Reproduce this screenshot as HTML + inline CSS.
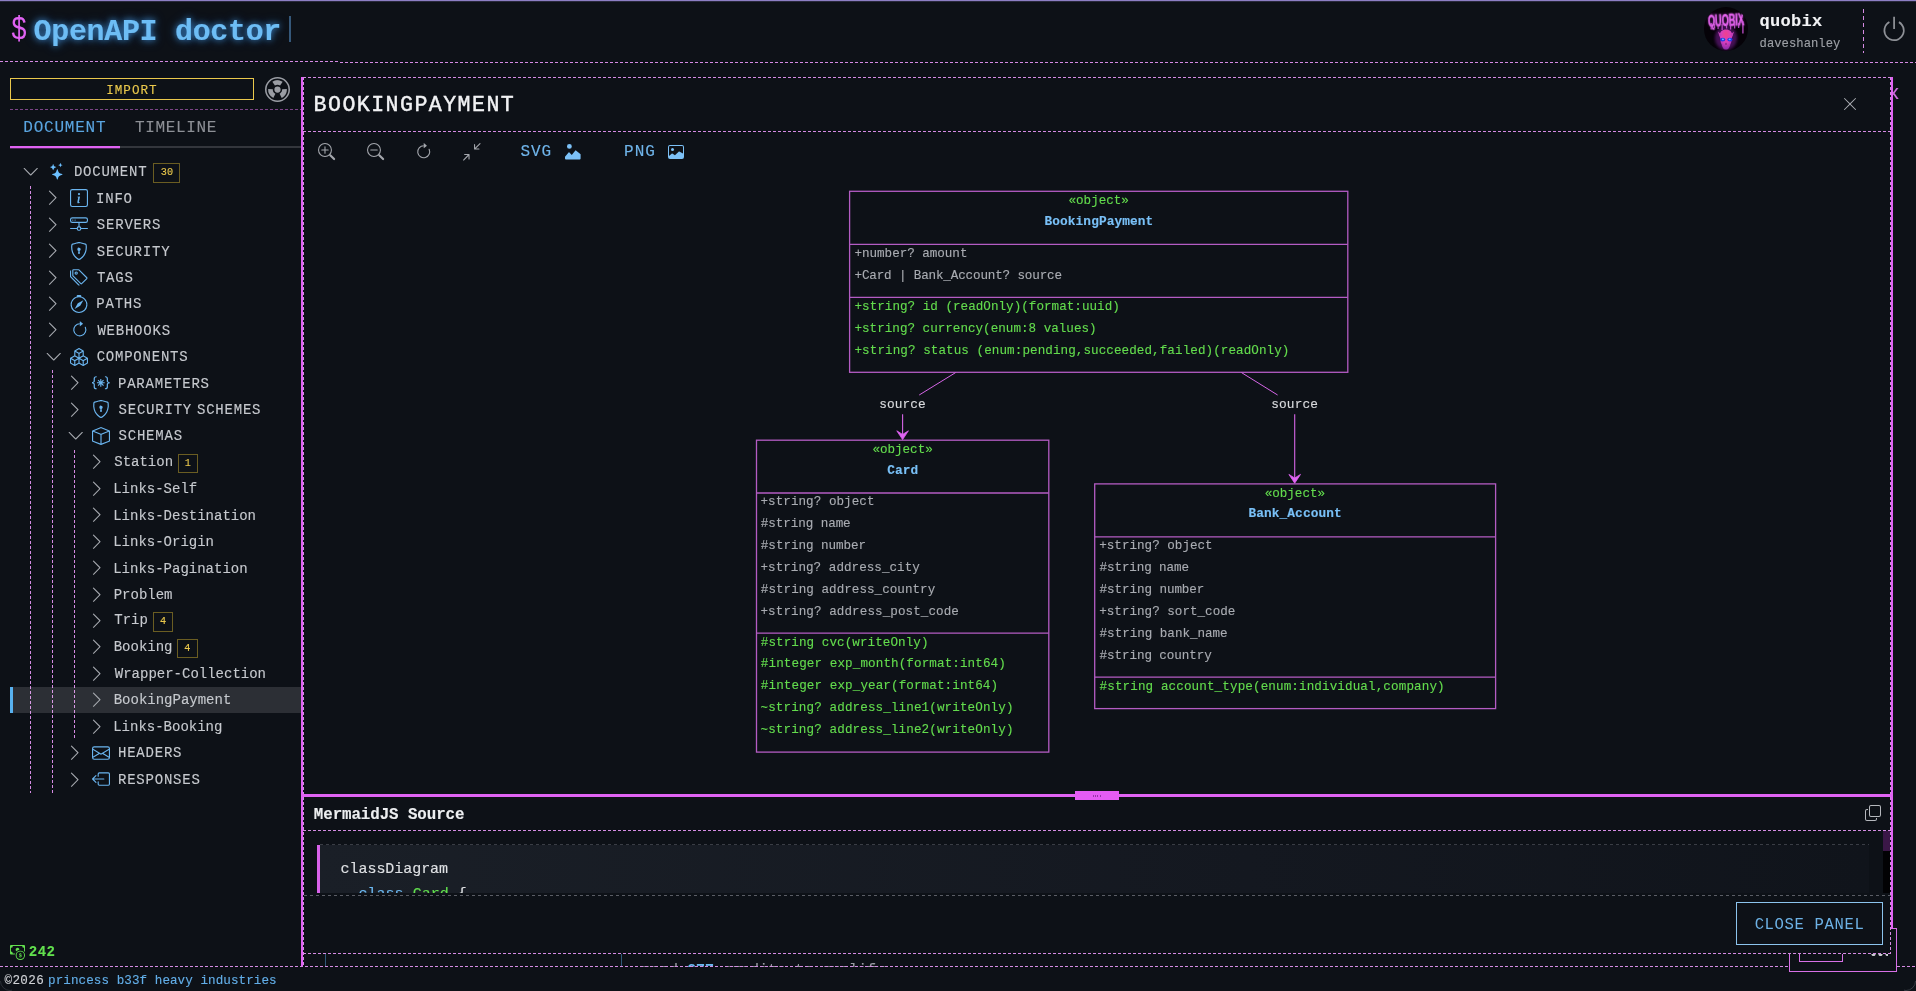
<!DOCTYPE html>
<html lang="en"><head><meta charset="utf-8"><title>OpenAPI doctor</title>
<style>
html,body{margin:0;padding:0;background:#0d1117;}
body{width:1916px;height:991px;position:relative;overflow:hidden;font-family:"Liberation Mono","DejaVu Sans Mono",monospace;}
.t{position:absolute;white-space:pre;line-height:1;-webkit-text-stroke:0.13px currentColor;}
.b{position:absolute;box-sizing:border-box;}
.i{position:absolute;display:block;overflow:visible;}
.clip{position:absolute;overflow:hidden;}
#root{position:absolute;left:0;top:0;width:1916px;height:991px;overflow:hidden;will-change:transform;}
</style></head><body><div id="root">
<div class="b" style="left:0px;top:0px;width:1916px;height:1px;background:#8d7fc4;"></div>
<div class="b" style="left:0px;top:1px;width:1916px;height:1px;background:rgba(141,127,196,.22);"></div>
<div class="t" style="left:13.34px;top:14.40px;font-size:33.8px;color:#e063f3;transform:scaleX(.79);transform-origin:0 0;left:0;margin-left:10.54px;">$</div>
<div class="t" style="left:33.55px;top:17.10px;font-size:30px;color:#6dbdf5;font-weight:700;letter-spacing:-0.324px;text-shadow:0 0 6px rgba(70,160,240,.75),0 0 12px rgba(60,140,230,.45);">OpenAPI doctor</div>
<div class="b" style="left:288.6px;top:15.5px;width:2.2px;height:26px;background:#35587a;"></div>
<div class="b" style="left:0px;top:61px;width:340px;height:1px;background:repeating-linear-gradient(90deg,#d58be3 0 3px,transparent 3px 5px);"></div>
<div class="b" style="left:340px;top:62px;width:1576px;height:1px;background:repeating-linear-gradient(90deg,#d58be3 0 3px,transparent 3px 5px);"></div>
<svg class="i" style="left:1704px;top:6px" width="44" height="46" viewBox="0 0 44 46">
<defs><clipPath id="av"><circle cx="22" cy="23" r="22"/></clipPath>
<filter id="gl" x="-30%" y="-30%" width="160%" height="160%"><feGaussianBlur stdDeviation="1.6"/></filter>
<filter id="gs" x="-30%" y="-30%" width="160%" height="160%"><feGaussianBlur stdDeviation="0.5"/></filter>
<radialGradient id="sk" cx="50%" cy="25%" r="75%"><stop offset="0" stop-color="#f0408c"/><stop offset="0.55" stop-color="#d63fc0"/><stop offset="1" stop-color="#8a2aa8"/></radialGradient></defs>
<circle cx="22" cy="23" r="22" fill="#050208"/>
<g clip-path="url(#av)">
<ellipse cx="22" cy="32" rx="11" ry="12" fill="#7a1f98" opacity=".55" filter="url(#gl)"/>
<text x="22" y="20" text-anchor="middle" font-family="Liberation Sans, sans-serif" font-weight="700" font-size="16" fill="#b040c8" opacity=".7" textLength="36" lengthAdjust="spacingAndGlyphs" filter="url(#gl)">QUOBIX</text>
<text x="22" y="20" text-anchor="middle" font-family="Liberation Sans, sans-serif" font-weight="700" font-size="16" fill="#e564ee" stroke="#e564ee" stroke-width=".5" textLength="36" lengthAdjust="spacingAndGlyphs" transform="rotate(-3 22 14)" filter="url(#gs)">QUOBIX</text>
<path d="M6.500 17h1.300v6.500h-1.300zM10 18h1.200v4H10zM13.500 18h1.200v5h-1.200zM17.500 18h1.300v6h-1.300zM22 18h1.200v4.500H22zM26 18h1.200v5.500H26zM30 18h1.300v4.500h-1.300zM34 17h1.300v5h-1.300zM38.200 15h1.400v12.500h-1.400z" fill="#cf55dc" opacity=".85"/>
<path d="M22 23.500c-3.600 0-6.300 2.300-6.300 5.800 0 1.800.5 3.200 1.200 4.300-.6 1.500-.3 3.300.7 4.600.5 2.600 1.900 5.400 4.400 5.400s3.900-2.800 4.400-5.400c1-1.300 1.300-3.100.7-4.600.7-1.100 1.200-2.500 1.200-4.300 0-3.500-2.700-5.800-6.300-5.800z" fill="url(#sk)" filter="url(#gs)"/>
<path d="M14 25.500l4 3.500-2.500 1.500zM30 25.500l-4 3.500 2.500 1.500z" fill="#c23fb6"/>
<ellipse cx="18.700" cy="33.600" rx="2.600" ry="1.900" fill="#2238e8" filter="url(#gs)"/>
<ellipse cx="25.900" cy="33.600" rx="2.600" ry="1.900" fill="#2238e8" filter="url(#gs)"/>
<ellipse cx="18.900" cy="33.400" rx="1.100" ry=".8" fill="#7aa4ff"/>
<ellipse cx="25.700" cy="33.400" rx="1.100" ry=".8" fill="#7aa4ff"/>
<path d="M21.300 38.500l.7-2 .7 2z" fill="#3a0f48"/>
</g></svg>
<div class="t" style="left:1759.59px;top:12.70px;font-size:17px;color:#f2f3f5;font-weight:700;letter-spacing:0.282px;">quobix</div>
<div class="t" style="left:1759.58px;top:37.50px;font-size:12.2px;color:#9da0a6;letter-spacing:0.029px;">daveshanley</div>
<div class="b" style="left:1863px;top:9px;width:1px;height:44px;background:repeating-linear-gradient(180deg,#d58be3 0 4px,transparent 4px 7px);"></div>
<svg class="i" style="left:1879.90px;top:14.80px;" width="28.2" height="28.2" viewBox="0 0 16 16" fill="#8e9197"><path d="M7.5 1v7h1V1h-1z"/><path d="M3 8.812a4.999 4.999 0 0 1 2.578-4.375l-.485-.874A6 6 0 1 0 11 3.616l-.501.865A5 5 0 1 1 3 8.812z"/></svg>
<div class="b" style="left:10px;top:78px;width:244px;height:22.4px;border:1px solid #eac84c;"></div>
<div class="t" style="left:106.16px;top:84.70px;font-size:12.6px;color:#eac84c;letter-spacing:1.030px;">IMPORT</div>
<svg class="i" style="left:264.70px;top:76.90px;" width="25" height="25" viewBox="0 0 16 16" fill="#9a9da4"><path d="M8 1a7 7 0 1 0 0 14A7 7 0 0 0 8 1ZM0 8a8 8 0 1 1 16 0A8 8 0 0 1 0 8Z"/><path d="M9.653 5.496A2.986 2.986 0 0 0 8 5c-.61 0-1.179.183-1.653.496L4.694 2.992A5.972 5.972 0 0 1 8 2c1.222 0 2.358.365 3.306.992L9.653 5.496Zm1.342 2.324a2.986 2.986 0 0 1-.884 2.312 3.01 3.01 0 0 1-.769.552l1.342 2.683c.57-.286 1.09-.66 1.538-1.103a5.986 5.986 0 0 0 1.767-4.624l-2.994.18Zm-5.679 5.548 1.342-2.684A3 3 0 0 1 5.005 7.82l-2.994-.18a6 6 0 0 0 3.306 5.728ZM10 8a2 2 0 1 1-4 0 2 2 0 0 1 4 0Z"/></svg>
<div class="b" style="left:10px;top:109px;width:291px;height:1px;background:repeating-linear-gradient(90deg,#7c4487 0 3px,transparent 3px 5px);"></div>
<div class="t" style="left:23.33px;top:119.90px;font-size:16px;color:#5aa5e0;letter-spacing:0.765px;">DOCUMENT</div>
<div class="t" style="left:135.01px;top:119.90px;font-size:16px;color:#8d9096;letter-spacing:0.631px;">TIMELINE</div>
<div class="b" style="left:120px;top:146px;width:181px;height:2px;background:#33363c;"></div>
<div class="b" style="left:10px;top:146px;width:110px;height:2px;background:#e063f3;"></div>
<div class="b" style="left:10px;top:148px;width:110px;height:1px;background:rgba(224,99,243,.3);"></div>
<div class="b" style="left:30px;top:186px;width:1px;height:607px;background:repeating-linear-gradient(180deg,#d58be3 0 3px,transparent 3px 5px);"></div>
<div class="b" style="left:52px;top:370px;width:1px;height:423px;background:repeating-linear-gradient(180deg,#d58be3 0 3px,transparent 3px 5px);"></div>
<div class="b" style="left:74px;top:450px;width:1px;height:290px;background:repeating-linear-gradient(180deg,#d58be3 0 3px,transparent 3px 5px);"></div>
<div class="b" style="left:10px;top:687.2px;width:291px;height:25.4px;background:rgba(255,255,255,.13);"></div>
<div class="b" style="left:10px;top:687.2px;width:3.2px;height:25.4px;background:#58b2f0;"></div>
<svg class="i" style="left:22.36px;top:163.16px;" width="17.48" height="17.48" viewBox="0 0 16 16" fill="#a7aab0"><path fill-rule="evenodd" d="M1.646 4.646a.5.5 0 0 1 .708 0L8 10.293l5.646-5.647a.5.5 0 0 1 .708.708l-6 6a.5.5 0 0 1-.708 0l-6-6a.5.5 0 0 1 0-.708z"/></svg>
<svg class="i" style="left:48.60px;top:163.00px;" width="16.6" height="16.6" viewBox="0 0 16 16" fill="#6cc0ff"><path d="M7.657 6.247c.11-.33.576-.33.686 0l.645 1.937a2.89 2.89 0 0 0 1.829 1.828l1.936.645c.33.11.33.576 0 .686l-1.937.645a2.89 2.89 0 0 0-1.828 1.829l-.645 1.936a.361.361 0 0 1-.686 0l-.645-1.937a2.89 2.89 0 0 0-1.828-1.828l-1.937-.645a.361.361 0 0 1 0-.686l1.937-.645a2.89 2.89 0 0 0 1.828-1.828l.645-1.937zM3.794 1.148a.217.217 0 0 1 .412 0l.387 1.162c.173.518.579.924 1.097 1.097l1.162.387a.217.217 0 0 1 0 .412l-1.162.387A1.734 1.734 0 0 0 4.593 5.69l-.387 1.162a.217.217 0 0 1-.412 0L3.407 5.69A1.734 1.734 0 0 0 2.31 4.593l-1.162-.387a.217.217 0 0 1 0-.412l1.162-.387A1.734 1.734 0 0 0 3.407 2.31l.387-1.162zM10.863.099a.145.145 0 0 1 .274 0l.258.774c.115.346.386.617.732.732l.774.258a.145.145 0 0 1 0 .274l-.774.258a1.156 1.156 0 0 0-.732.732l-.258.774a.145.145 0 0 1-.274 0l-.258-.774a1.156 1.156 0 0 0-.732-.732L9.1 2.137a.145.145 0 0 1 0-.274l.774-.258c.346-.115.617-.386.732-.732L10.863.1z"/></svg>
<div class="t" style="left:73.89px;top:165.25px;font-size:14px;color:#c6c9ce;letter-spacing:0.780px;">DOCUMENT</div>
<div class="b" style="left:153.4px;top:163.2px;width:27px;height:19.5px;border:1px solid #6a5d22;"></div>
<div class="t" style="left:160.81px;top:168.00px;font-size:10.2px;color:#eac84c;">30</div>
<svg class="i" style="left:44.08px;top:189.28px;" width="17.48" height="17.48" viewBox="0 0 16 16" fill="#a7aab0"><path fill-rule="evenodd" d="M4.646 1.646a.5.5 0 0 1 .708 0l6 6a.5.5 0 0 1 0 .708l-6 6a.5.5 0 0 1-.708-.708L10.293 8 4.646 2.354a.5.5 0 0 1 0-.708z"/></svg>
<svg class="i" style="left:70.00px;top:189.02px;" width="18" height="18" viewBox="0 0 16 16" fill="#6ab4ee"><path d="M14 1a1 1 0 0 1 1 1v12a1 1 0 0 1-1 1H2a1 1 0 0 1-1-1V2a1 1 0 0 1 1-1h12zM2 0a2 2 0 0 0-2 2v12a2 2 0 0 0 2 2h12a2 2 0 0 0 2-2V2a2 2 0 0 0-2-2H2z"/><path d="m8.93 6.588-2.29.287-.082.38.45.083c.294.07.352.176.288.469l-.738 3.468c-.194.897.105 1.319.808 1.319.545 0 1.178-.252 1.465-.598l.088-.416c-.2.176-.492.246-.686.246-.275 0-.375-.193-.304-.533L8.93 6.588zM9 4.5a1 1 0 1 1-2 0 1 1 0 0 1 2 0z"/></svg>
<div class="t" style="left:96.02px;top:191.67px;font-size:14px;color:#c6c9ce;letter-spacing:0.780px;">INFO</div>
<svg class="i" style="left:44.08px;top:215.70px;" width="17.48" height="17.48" viewBox="0 0 16 16" fill="#a7aab0"><path fill-rule="evenodd" d="M4.646 1.646a.5.5 0 0 1 .708 0l6 6a.5.5 0 0 1 0 .708l-6 6a.5.5 0 0 1-.708-.708L10.293 8 4.646 2.354a.5.5 0 0 1 0-.708z"/></svg>
<svg class="i" style="left:70.00px;top:215.44px;" width="18" height="18" viewBox="0 0 16 16" fill="#6ab4ee"><path d="M4.5 5a.5.5 0 1 0 0-1 .5.5 0 0 0 0 1zM3 4.5a.5.5 0 1 1-1 0 .5.5 0 0 1 1 0z"/><path d="M0 4a2 2 0 0 1 2-2h12a2 2 0 0 1 2 2v1a2 2 0 0 1-2 2H8.5v3a1.5 1.5 0 0 1 1.5 1.5h5.5a.5.5 0 0 1 0 1H10A1.5 1.5 0 0 1 8.5 14h-1A1.5 1.5 0 0 1 6 12.5H.5a.5.5 0 0 1 0-1H6A1.5 1.5 0 0 1 7.5 10V7H2a2 2 0 0 1-2-2V4zm1 0v1a1 1 0 0 0 1 1h12a1 1 0 0 0 1-1V4a1 1 0 0 0-1-1H2a1 1 0 0 0-1 1zm6 7.5v1a.5.5 0 0 0 .5.5h1a.5.5 0 0 0 .5-.5v-1a.5.5 0 0 0-.5-.5h-1a.5.5 0 0 0-.5.5z"/></svg>
<div class="t" style="left:96.86px;top:218.09px;font-size:14px;color:#c6c9ce;letter-spacing:0.780px;">SERVERS</div>
<svg class="i" style="left:44.08px;top:242.12px;" width="17.48" height="17.48" viewBox="0 0 16 16" fill="#a7aab0"><path fill-rule="evenodd" d="M4.646 1.646a.5.5 0 0 1 .708 0l6 6a.5.5 0 0 1 0 .708l-6 6a.5.5 0 0 1-.708-.708L10.293 8 4.646 2.354a.5.5 0 0 1 0-.708z"/></svg>
<svg class="i" style="left:70.00px;top:241.86px;" width="18" height="18" viewBox="0 0 16 16" fill="#6ab4ee"><path d="M5.338 1.59a61.44 61.44 0 0 0-2.837.856.481.481 0 0 0-.328.39c-.554 4.157.726 7.19 2.253 9.188a10.725 10.725 0 0 0 2.287 2.233c.346.244.652.42.893.533.12.057.218.095.293.118a.55.55 0 0 0 .101.025.615.615 0 0 0 .1-.025c.076-.023.174-.061.294-.118.24-.113.547-.29.893-.533a10.726 10.726 0 0 0 2.287-2.233c1.527-1.997 2.807-5.031 2.253-9.188a.48.48 0 0 0-.328-.39c-.651-.213-1.75-.56-2.837-.855C9.552 1.29 8.531 1.067 8 1.067c-.53 0-1.552.223-2.662.524zM5.072.56C6.157.265 7.31 0 8 0s1.843.265 2.928.56c1.11.3 2.229.655 2.887.87a1.54 1.54 0 0 1 1.044 1.262c.596 4.477-.787 7.795-2.465 9.99a11.775 11.775 0 0 1-2.517 2.453 7.159 7.159 0 0 1-1.048.625c-.28.132-.581.24-.829.24s-.548-.108-.829-.24a7.158 7.158 0 0 1-1.048-.625 11.777 11.777 0 0 1-2.517-2.453C1.928 10.487.545 7.169 1.141 2.692A1.54 1.54 0 0 1 2.185 1.43 62.456 62.456 0 0 1 5.072.56z"/><path d="M9.5 6.5a1.5 1.5 0 0 1-1 1.415l.385 1.99a.5.5 0 0 1-.491.595h-.788a.5.5 0 0 1-.49-.595l.384-1.99a1.5 1.5 0 1 1 2-1.415z"/></svg>
<div class="t" style="left:96.86px;top:244.51px;font-size:14px;color:#c6c9ce;letter-spacing:0.780px;">SECURITY</div>
<svg class="i" style="left:44.08px;top:268.54px;" width="17.48" height="17.48" viewBox="0 0 16 16" fill="#a7aab0"><path fill-rule="evenodd" d="M4.646 1.646a.5.5 0 0 1 .708 0l6 6a.5.5 0 0 1 0 .708l-6 6a.5.5 0 0 1-.708-.708L10.293 8 4.646 2.354a.5.5 0 0 1 0-.708z"/></svg>
<svg class="i" style="left:70.00px;top:268.28px;" width="18" height="18" viewBox="0 0 16 16" fill="#6ab4ee"><path d="M3 2v4.586l7 7L14.586 9l-7-7H3zM2 2a1 1 0 0 1 1-1h4.586a1 1 0 0 1 .707.293l7 7a1 1 0 0 1 0 1.414l-4.586 4.586a1 1 0 0 1-1.414 0l-7-7A1 1 0 0 1 2 6.586V2z"/><path d="M5.5 5a.5.5 0 1 1 0-1 .5.5 0 0 1 0 1zm0 1a1.5 1.5 0 1 0 0-3 1.5 1.5 0 0 0 0 3zM1 7.086a1 1 0 0 0 .293.707L8.75 15.25l-.043.043a1 1 0 0 1-1.414 0l-7-7A1 1 0 0 1 0 7.586V3a1 1 0 0 1 1-1v5.086z"/></svg>
<div class="t" style="left:96.88px;top:270.93px;font-size:14px;color:#c6c9ce;letter-spacing:0.780px;">TAGS</div>
<svg class="i" style="left:44.08px;top:294.96px;" width="17.48" height="17.48" viewBox="0 0 16 16" fill="#a7aab0"><path fill-rule="evenodd" d="M4.646 1.646a.5.5 0 0 1 .708 0l6 6a.5.5 0 0 1 0 .708l-6 6a.5.5 0 0 1-.708-.708L10.293 8 4.646 2.354a.5.5 0 0 1 0-.708z"/></svg>
<svg class="i" style="left:70.00px;top:294.70px;" width="18" height="18" viewBox="0 0 16 16" fill="#6ab4ee"><path d="M8 16.016a7.5 7.5 0 0 0 1.962-14.74A1 1 0 0 0 9 0H7a1 1 0 0 0-.962 1.276A7.5 7.5 0 0 0 8 16.016zm6.5-7.5a6.5 6.5 0 1 1-13 0 6.5 6.5 0 0 1 13 0z"/><path d="m6.94 7.44 4.95-2.83-2.83 4.95-4.949 2.83 2.828-4.95z"/></svg>
<div class="t" style="left:96.29px;top:297.35px;font-size:14px;color:#c6c9ce;letter-spacing:0.780px;">PATHS</div>
<svg class="i" style="left:44.08px;top:321.38px;" width="17.48" height="17.48" viewBox="0 0 16 16" fill="#a7aab0"><path fill-rule="evenodd" d="M4.646 1.646a.5.5 0 0 1 .708 0l6 6a.5.5 0 0 1 0 .708l-6 6a.5.5 0 0 1-.708-.708L10.293 8 4.646 2.354a.5.5 0 0 1 0-.708z"/></svg>
<svg class="i" style="left:70.50px;top:320.62px;" width="17.6" height="17.6" viewBox="0 0 16 16" fill="#6ab4ee"><path fill-rule="evenodd" d="M8 3a5 5 0 1 0 4.546 2.914.5.5 0 0 1 .908-.417A6 6 0 1 1 8 2v1z"/><path d="M8 4.466V.534a.25.25 0 0 1 .41-.192l2.36 1.966c.12.1.12.284 0 .384L8.41 4.658A.25.25 0 0 1 8 4.466z"/></svg>
<div class="t" style="left:97.40px;top:323.77px;font-size:14px;color:#c6c9ce;letter-spacing:0.780px;">WEBHOOKS</div>
<svg class="i" style="left:44.56px;top:348.10px;" width="17.48" height="17.48" viewBox="0 0 16 16" fill="#a7aab0"><path fill-rule="evenodd" d="M1.646 4.646a.5.5 0 0 1 .708 0L8 10.293l5.646-5.647a.5.5 0 0 1 .708.708l-6 6a.5.5 0 0 1-.708 0l-6-6a.5.5 0 0 1 0-.708z"/></svg>
<svg class="i" style="left:70.00px;top:347.54px;" width="18" height="18" viewBox="0 0 16 16" fill="#6ab4ee"><path d="M7.752.066a.5.5 0 0 1 .496 0l3.75 2.143a.5.5 0 0 1 .252.434v3.995l3.498 2A.5.5 0 0 1 16 9.07v4.286a.5.5 0 0 1-.252.434l-3.75 2.143a.5.5 0 0 1-.496 0l-3.502-2-3.502 2.001a.5.5 0 0 1-.496 0l-3.75-2.143A.5.5 0 0 1 0 13.357V9.071a.5.5 0 0 1 .252-.434L3.75 6.638V2.643a.5.5 0 0 1 .252-.434L7.752.066ZM4.25 7.504 1.508 9.071l2.742 1.567 2.742-1.567L4.25 7.504ZM7.5 9.933l-2.75 1.571v3.134l2.75-1.571V9.933Zm1 3.134 2.75 1.571v-3.134L8.5 9.933v3.134Zm.508-3.996 2.742 1.567 2.742-1.567-2.742-1.567-2.742 1.567Zm2.242-2.433V3.504L8.5 5.076V8.21l2.75-1.572ZM7.5 8.21V5.076L4.75 3.504v3.134L7.5 8.21ZM5.258 2.643 8 4.21l2.742-1.567L8 1.076 5.258 2.643ZM15 9.933l-2.75 1.571v3.134L15 13.067V9.933ZM3.75 14.638v-3.134L1 9.933v3.134l2.75 1.571Z"/></svg>
<div class="t" style="left:96.63px;top:350.19px;font-size:14px;color:#c6c9ce;letter-spacing:0.780px;">COMPONENTS</div>
<svg class="i" style="left:66.28px;top:374.22px;" width="17.48" height="17.48" viewBox="0 0 16 16" fill="#a7aab0"><path fill-rule="evenodd" d="M4.646 1.646a.5.5 0 0 1 .708 0l6 6a.5.5 0 0 1 0 .708l-6 6a.5.5 0 0 1-.708-.708L10.293 8 4.646 2.354a.5.5 0 0 1 0-.708z"/></svg>
<svg class="i" style="left:92.00px;top:373.76px;" width="17.6" height="17.6" viewBox="0 0 16 16" fill="#6ab4ee"><path fill-rule="evenodd" d="M1.114 8.063V7.9c1.005-.102 1.497-.615 1.497-1.6V4.503c0-1.094.39-1.538 1.354-1.538h.273V2h-.376C2.25 2 1.49 2.759 1.49 4.352v1.524c0 1.094-.376 1.456-1.49 1.456v1.299c1.114 0 1.49.362 1.49 1.456v1.524c0 1.593.759 2.352 2.372 2.352h.376v-.964h-.273c-.964 0-1.354-.444-1.354-1.538V9.663c0-.984-.492-1.497-1.497-1.6ZM14.886 7.9v.164c-1.005.103-1.497.616-1.497 1.6v1.798c0 1.094-.39 1.538-1.354 1.538h-.273v.964h.376c1.613 0 2.372-.759 2.372-2.352v-1.524c0-1.094.376-1.456 1.49-1.456v-1.3c-1.114 0-1.49-.362-1.49-1.456V4.352C14.51 2.759 13.75 2 12.138 2h-.376v.964h.273c.964 0 1.354.444 1.354 1.538V6.3c0 .984.492 1.497 1.497 1.6ZM7.5 11.5V9.207l-1.621 1.621-.707-.707L6.792 8.5H4.5v-1h2.293L5.172 5.879l.707-.707L7.5 6.792V4.5h1v2.293l1.621-1.621.707.707L9.208 7.5H11.5v1H9.207l1.621 1.621-.707.707L8.5 9.208V11.5h-1Z"/></svg>
<div class="t" style="left:117.99px;top:376.61px;font-size:14px;color:#c6c9ce;letter-spacing:0.780px;">PARAMETERS</div>
<svg class="i" style="left:66.28px;top:400.64px;" width="17.48" height="17.48" viewBox="0 0 16 16" fill="#a7aab0"><path fill-rule="evenodd" d="M4.646 1.646a.5.5 0 0 1 .708 0l6 6a.5.5 0 0 1 0 .708l-6 6a.5.5 0 0 1-.708-.708L10.293 8 4.646 2.354a.5.5 0 0 1 0-.708z"/></svg>
<svg class="i" style="left:92.00px;top:400.38px;" width="18" height="18" viewBox="0 0 16 16" fill="#6ab4ee"><path d="M5.338 1.59a61.44 61.44 0 0 0-2.837.856.481.481 0 0 0-.328.39c-.554 4.157.726 7.19 2.253 9.188a10.725 10.725 0 0 0 2.287 2.233c.346.244.652.42.893.533.12.057.218.095.293.118a.55.55 0 0 0 .101.025.615.615 0 0 0 .1-.025c.076-.023.174-.061.294-.118.24-.113.547-.29.893-.533a10.726 10.726 0 0 0 2.287-2.233c1.527-1.997 2.807-5.031 2.253-9.188a.48.48 0 0 0-.328-.39c-.651-.213-1.75-.56-2.837-.855C9.552 1.29 8.531 1.067 8 1.067c-.53 0-1.552.223-2.662.524zM5.072.56C6.157.265 7.31 0 8 0s1.843.265 2.928.56c1.11.3 2.229.655 2.887.87a1.54 1.54 0 0 1 1.044 1.262c.596 4.477-.787 7.795-2.465 9.99a11.775 11.775 0 0 1-2.517 2.453 7.159 7.159 0 0 1-1.048.625c-.28.132-.581.24-.829.24s-.548-.108-.829-.24a7.158 7.158 0 0 1-1.048-.625 11.777 11.777 0 0 1-2.517-2.453C1.928 10.487.545 7.169 1.141 2.692A1.54 1.54 0 0 1 2.185 1.43 62.456 62.456 0 0 1 5.072.56z"/><path d="M9.5 6.5a1.5 1.5 0 0 1-1 1.415l.385 1.99a.5.5 0 0 1-.491.595h-.788a.5.5 0 0 1-.49-.595l.384-1.99a1.5 1.5 0 1 1 2-1.415z"/></svg>
<div class="t" style="left:118.56px;top:403.03px;font-size:14px;color:#c6c9ce;letter-spacing:0.780px;word-spacing:-4.2px;">SECURITY SCHEMES</div>
<svg class="i" style="left:66.76px;top:427.36px;" width="17.48" height="17.48" viewBox="0 0 16 16" fill="#a7aab0"><path fill-rule="evenodd" d="M1.646 4.646a.5.5 0 0 1 .708 0L8 10.293l5.646-5.647a.5.5 0 0 1 .708.708l-6 6a.5.5 0 0 1-.708 0l-6-6a.5.5 0 0 1 0-.708z"/></svg>
<svg class="i" style="left:92.00px;top:426.80px;" width="18" height="18" viewBox="0 0 16 16" fill="#6ab4ee"><path d="M8.186 1.113a.5.5 0 0 0-.372 0L1.846 3.5 8 5.961 14.154 3.5 8.186 1.113zM15 4.239l-6.5 2.6v7.922l6.5-2.6V4.24zM7.5 14.762V6.838L1 4.239v7.923l6.5 2.6zM7.443.184a1.5 1.5 0 0 1 1.114 0l7.129 2.852A.5.5 0 0 1 16 3.5v8.662a1 1 0 0 1-.629.928l-7.185 2.874a.5.5 0 0 1-.372 0L.63 13.09a1 1 0 0 1-.63-.928V3.5a.5.5 0 0 1 .314-.464L7.443.184z"/></svg>
<div class="t" style="left:118.56px;top:429.45px;font-size:14px;color:#c6c9ce;letter-spacing:0.780px;">SCHEMAS</div>
<svg class="i" style="left:87.88px;top:453.48px;" width="17.48" height="17.48" viewBox="0 0 16 16" fill="#a7aab0"><path fill-rule="evenodd" d="M4.646 1.646a.5.5 0 0 1 .708 0l6 6a.5.5 0 0 1 0 .708l-6 6a.5.5 0 0 1-.708-.708L10.293 8 4.646 2.354a.5.5 0 0 1 0-.708z"/></svg>
<div class="t" style="left:114.26px;top:454.87px;font-size:14px;color:#c6c9ce;">Station</div>
<div class="b" style="left:177.6px;top:453.8px;width:20.6px;height:19.5px;border:1px solid #6a5d22;"></div>
<div class="t" style="left:184.76px;top:458.62px;font-size:10.2px;color:#eac84c;">1</div>
<svg class="i" style="left:87.88px;top:479.90px;" width="17.48" height="17.48" viewBox="0 0 16 16" fill="#a7aab0"><path fill-rule="evenodd" d="M4.646 1.646a.5.5 0 0 1 .708 0l6 6a.5.5 0 0 1 0 .708l-6 6a.5.5 0 0 1-.708-.708L10.293 8 4.646 2.354a.5.5 0 0 1 0-.708z"/></svg>
<div class="t" style="left:113.18px;top:482.29px;font-size:14px;color:#c6c9ce;">Links-Self</div>
<svg class="i" style="left:87.88px;top:506.32px;" width="17.48" height="17.48" viewBox="0 0 16 16" fill="#a7aab0"><path fill-rule="evenodd" d="M4.646 1.646a.5.5 0 0 1 .708 0l6 6a.5.5 0 0 1 0 .708l-6 6a.5.5 0 0 1-.708-.708L10.293 8 4.646 2.354a.5.5 0 0 1 0-.708z"/></svg>
<div class="t" style="left:113.18px;top:508.71px;font-size:14px;color:#c6c9ce;">Links-Destination</div>
<svg class="i" style="left:87.88px;top:532.74px;" width="17.48" height="17.48" viewBox="0 0 16 16" fill="#a7aab0"><path fill-rule="evenodd" d="M4.646 1.646a.5.5 0 0 1 .708 0l6 6a.5.5 0 0 1 0 .708l-6 6a.5.5 0 0 1-.708-.708L10.293 8 4.646 2.354a.5.5 0 0 1 0-.708z"/></svg>
<div class="t" style="left:113.18px;top:535.13px;font-size:14px;color:#c6c9ce;">Links-Origin</div>
<svg class="i" style="left:87.88px;top:559.16px;" width="17.48" height="17.48" viewBox="0 0 16 16" fill="#a7aab0"><path fill-rule="evenodd" d="M4.646 1.646a.5.5 0 0 1 .708 0l6 6a.5.5 0 0 1 0 .708l-6 6a.5.5 0 0 1-.708-.708L10.293 8 4.646 2.354a.5.5 0 0 1 0-.708z"/></svg>
<div class="t" style="left:113.18px;top:561.55px;font-size:14px;color:#c6c9ce;">Links-Pagination</div>
<svg class="i" style="left:87.88px;top:585.58px;" width="17.48" height="17.48" viewBox="0 0 16 16" fill="#a7aab0"><path fill-rule="evenodd" d="M4.646 1.646a.5.5 0 0 1 .708 0l6 6a.5.5 0 0 1 0 .708l-6 6a.5.5 0 0 1-.708-.708L10.293 8 4.646 2.354a.5.5 0 0 1 0-.708z"/></svg>
<div class="t" style="left:113.69px;top:587.97px;font-size:14px;color:#c6c9ce;">Problem</div>
<svg class="i" style="left:87.88px;top:612.00px;" width="17.48" height="17.48" viewBox="0 0 16 16" fill="#a7aab0"><path fill-rule="evenodd" d="M4.646 1.646a.5.5 0 0 1 .708 0l6 6a.5.5 0 0 1 0 .708l-6 6a.5.5 0 0 1-.708-.708L10.293 8 4.646 2.354a.5.5 0 0 1 0-.708z"/></svg>
<div class="t" style="left:114.28px;top:613.39px;font-size:14px;color:#c6c9ce;">Trip</div>
<div class="b" style="left:152.7px;top:612.3px;width:20.6px;height:19.5px;border:1px solid #6a5d22;"></div>
<div class="t" style="left:159.98px;top:617.14px;font-size:10.2px;color:#eac84c;">4</div>
<svg class="i" style="left:87.88px;top:638.42px;" width="17.48" height="17.48" viewBox="0 0 16 16" fill="#a7aab0"><path fill-rule="evenodd" d="M4.646 1.646a.5.5 0 0 1 .708 0l6 6a.5.5 0 0 1 0 .708l-6 6a.5.5 0 0 1-.708-.708L10.293 8 4.646 2.354a.5.5 0 0 1 0-.708z"/></svg>
<div class="t" style="left:113.69px;top:639.81px;font-size:14px;color:#c6c9ce;">Booking</div>
<div class="b" style="left:177.1px;top:638.8px;width:20.6px;height:19.5px;border:1px solid #6a5d22;"></div>
<div class="t" style="left:184.35px;top:643.56px;font-size:10.2px;color:#eac84c;">4</div>
<svg class="i" style="left:87.88px;top:664.84px;" width="17.48" height="17.48" viewBox="0 0 16 16" fill="#a7aab0"><path fill-rule="evenodd" d="M4.646 1.646a.5.5 0 0 1 .708 0l6 6a.5.5 0 0 1 0 .708l-6 6a.5.5 0 0 1-.708-.708L10.293 8 4.646 2.354a.5.5 0 0 1 0-.708z"/></svg>
<div class="t" style="left:114.80px;top:667.23px;font-size:14px;color:#c6c9ce;">Wrapper-Collection</div>
<svg class="i" style="left:87.88px;top:691.26px;" width="17.48" height="17.48" viewBox="0 0 16 16" fill="#a7aab0"><path fill-rule="evenodd" d="M4.646 1.646a.5.5 0 0 1 .708 0l6 6a.5.5 0 0 1 0 .708l-6 6a.5.5 0 0 1-.708-.708L10.293 8 4.646 2.354a.5.5 0 0 1 0-.708z"/></svg>
<div class="t" style="left:113.69px;top:692.65px;font-size:14px;color:#c6c9ce;">BookingPayment</div>
<svg class="i" style="left:87.88px;top:717.68px;" width="17.48" height="17.48" viewBox="0 0 16 16" fill="#a7aab0"><path fill-rule="evenodd" d="M4.646 1.646a.5.5 0 0 1 .708 0l6 6a.5.5 0 0 1 0 .708l-6 6a.5.5 0 0 1-.708-.708L10.293 8 4.646 2.354a.5.5 0 0 1 0-.708z"/></svg>
<div class="t" style="left:113.18px;top:720.07px;font-size:14px;color:#c6c9ce;">Links-Booking</div>
<svg class="i" style="left:66.28px;top:744.10px;" width="17.48" height="17.48" viewBox="0 0 16 16" fill="#a7aab0"><path fill-rule="evenodd" d="M4.646 1.646a.5.5 0 0 1 .708 0l6 6a.5.5 0 0 1 0 .708l-6 6a.5.5 0 0 1-.708-.708L10.293 8 4.646 2.354a.5.5 0 0 1 0-.708z"/></svg>
<svg class="i" style="left:92.00px;top:743.84px;" width="18" height="18" viewBox="0 0 16 16" fill="#6ab4ee"><path d="M0 4a2 2 0 0 1 2-2h12a2 2 0 0 1 2 2v8a2 2 0 0 1-2 2H2a2 2 0 0 1-2-2V4Zm2-1a1 1 0 0 0-1 1v.217l7 4.2 7-4.2V4a1 1 0 0 0-1-1H2Zm13 2.383-4.708 2.825L15 11.105V5.383Zm-.034 6.876-5.64-3.471L8 9.583l-1.326-.795-5.64 3.47A1 1 0 0 0 2 13h12a1 1 0 0 0 .966-.741ZM1 11.105l4.708-2.897L1 5.383v5.722Z"/></svg>
<div class="t" style="left:117.99px;top:746.49px;font-size:14px;color:#c6c9ce;letter-spacing:0.780px;">HEADERS</div>
<svg class="i" style="left:66.28px;top:770.52px;" width="17.48" height="17.48" viewBox="0 0 16 16" fill="#a7aab0"><path fill-rule="evenodd" d="M4.646 1.646a.5.5 0 0 1 .708 0l6 6a.5.5 0 0 1 0 .708l-6 6a.5.5 0 0 1-.708-.708L10.293 8 4.646 2.354a.5.5 0 0 1 0-.708z"/></svg>
<svg class="i" style="left:92.00px;top:770.26px;" width="18" height="18" viewBox="0 0 16 16" fill="#6ab4ee"><path fill-rule="evenodd" d="M6 12.5a.5.5 0 0 0 .5.5h8a.5.5 0 0 0 .5-.5v-9a.5.5 0 0 0-.5-.5h-8a.5.5 0 0 0-.5.5v2a.5.5 0 0 1-1 0v-2A1.5 1.5 0 0 1 6.5 2h8A1.5 1.5 0 0 1 16 3.5v9a1.5 1.5 0 0 1-1.5 1.5h-8A1.5 1.5 0 0 1 5 12.5v-2a.5.5 0 0 1 1 0v2z"/><path fill-rule="evenodd" d="M.146 8.354a.5.5 0 0 1 0-.708l3-3a.5.5 0 1 1 .708.708L1.707 7.5H10.5a.5.5 0 0 1 0 1H1.707l2.147 2.146a.5.5 0 0 1-.708.708l-3-3z"/></svg>
<div class="t" style="left:117.99px;top:772.91px;font-size:14px;color:#c6c9ce;letter-spacing:0.780px;">RESPONSES</div>
<svg class="i" style="left:9.50px;top:945.20px;" width="15" height="15" viewBox="0 0 16 16" fill="#62e04e"><path fill-rule="evenodd" d="M11 15a4 4 0 1 0 0-8 4 4 0 0 0 0 8zm5-4a5 5 0 1 1-10 0 5 5 0 0 1 10 0z"/><path d="M9.438 11.944c.047.596.518 1.06 1.363 1.116v.44h.375v-.443c.875-.061 1.386-.529 1.386-1.207 0-.618-.39-.936-1.09-1.1l-.296-.07v-1.2c.376.043.614.248.671.532h.658c-.047-.575-.54-1.024-1.329-1.073V8.5h-.375v.45c-.747.073-1.255.522-1.255 1.158 0 .562.378.92 1.007 1.066l.248.061v1.272c-.384-.058-.639-.27-.696-.563h-.668zm1.36-1.354c-.369-.085-.569-.26-.569-.522 0-.294.216-.514.572-.578v1.1h-.003zm.432.746c.449.104.655.272.655.569 0 .339-.257.571-.709.614v-1.195l.054.012z"/><path d="M1 0a1 1 0 0 0-1 1v8a1 1 0 0 0 1 1h4.083c.058-.344.145-.678.258-1H3a2 2 0 0 0-2-2V3a2 2 0 0 0 2-2h10a2 2 0 0 0 2 2v3.528c.38.34.717.728 1 1.154V1a1 1 0 0 0-1-1H1z"/><path d="M9.998 5.083 10 5a2 2 0 1 0-3.132 1.65 5.982 5.982 0 0 1 3.13-1.567z"/></svg>
<div class="t" style="left:28.76px;top:945.30px;font-size:14px;color:#62e04e;font-weight:700;letter-spacing:0.479px;">242</div>
<div class="t" style="left:1887.38px;top:84.10px;font-size:20px;color:#d070e0;clip-path:inset(0 0 0 5.7px);">x</div>
<div class="b" style="left:1789px;top:928px;width:108px;height:44px;border:1px solid #d670e6;background:#0d1117;"></div>
<div class="b" style="left:1799px;top:940px;width:44px;height:21.5px;border:1px solid #d670e6;"></div>
<div class="b" style="left:301px;top:77px;width:1591px;height:877px;background:#0d1117;"></div>
<div class="b" style="left:301px;top:77px;width:2px;height:890px;background:#e063f3;"></div>
<div class="b" style="left:303px;top:77px;width:1px;height:890px;background:repeating-linear-gradient(180deg,#d58be3 0 3px,transparent 3px 5px);"></div>
<div class="b" style="left:303px;top:77px;width:1589px;height:1px;background:repeating-linear-gradient(90deg,#d58be3 0 3px,transparent 3px 5px);"></div>
<div class="b" style="left:1890px;top:77px;width:1px;height:877px;background:repeating-linear-gradient(180deg,#d58be3 0 3px,transparent 3px 5px);"></div>
<div class="b" style="left:1891px;top:77px;width:2px;height:851.5px;background:#e063f3;"></div>
<div class="t" style="left:313.59px;top:95.20px;font-size:21.6px;color:#f1f2f4;letter-spacing:1.442px;-webkit-text-stroke:0.45px #f1f2f4;">BOOKINGPAYMENT</div>
<svg class="i" style="left:1841.60px;top:95.70px;" width="16" height="16" viewBox="0 0 16 16" fill="#a9acb2"><path d="M2.146 2.854a.5.5 0 1 1 .708-.708L8 7.293l5.146-5.147a.5.5 0 0 1 .708.708L8.707 8l5.147 5.146a.5.5 0 0 1-.708.708L8 8.707l-5.146 5.147a.5.5 0 0 1-.708-.708L7.293 8 2.146 2.854Z"/></svg>
<div class="b" style="left:303px;top:131px;width:1588px;height:1px;background:repeating-linear-gradient(90deg,#d58be3 0 3px,transparent 3px 5px);"></div>
<svg class="i" style="left:318.00px;top:143.20px;" width="17.2" height="17.2" viewBox="0 0 16 16" fill="#a4a7ad"><path fill-rule="evenodd" d="M6.5 12a5.5 5.5 0 1 0 0-11 5.5 5.5 0 0 0 0 11zM13 6.5a6.5 6.5 0 1 1-13 0 6.5 6.5 0 0 1 13 0z"/><path d="M10.344 11.742c.03.04.062.078.098.115l3.85 3.85a1 1 0 0 0 1.415-1.414l-3.85-3.85a1.007 1.007 0 0 0-.115-.1 6.538 6.538 0 0 1-1.398 1.4z"/><path fill-rule="evenodd" d="M6.5 3a.5.5 0 0 1 .5.5V6h2.5a.5.5 0 0 1 0 1H7v2.5a.5.5 0 0 1-1 0V7H3.5a.5.5 0 0 1 0-1H6V3.5a.5.5 0 0 1 .5-.5z"/></svg>
<svg class="i" style="left:366.80px;top:143.20px;" width="17.2" height="17.2" viewBox="0 0 16 16" fill="#a4a7ad"><path fill-rule="evenodd" d="M6.5 12a5.5 5.5 0 1 0 0-11 5.5 5.5 0 0 0 0 11zM13 6.5a6.5 6.5 0 1 1-13 0 6.5 6.5 0 0 1 13 0z"/><path d="M10.344 11.742c.03.04.062.078.098.115l3.85 3.85a1 1 0 0 0 1.415-1.414l-3.85-3.85a1.007 1.007 0 0 0-.115-.1 6.538 6.538 0 0 1-1.398 1.4z"/><path fill-rule="evenodd" d="M3 6.5a.5.5 0 0 1 .5-.5h6a.5.5 0 0 1 0 1h-6a.5.5 0 0 1-.5-.5z"/></svg>
<svg class="i" style="left:415.00px;top:142.90px;" width="17.4" height="17.4" viewBox="0 0 16 16" fill="#a4a7ad"><path fill-rule="evenodd" d="M8 3a5 5 0 1 0 4.546 2.914.5.5 0 0 1 .908-.417A6 6 0 1 1 8 2v1z"/><path d="M8 4.466V.534a.25.25 0 0 1 .41-.192l2.36 1.966c.12.1.12.284 0 .384L8.41 4.658A.25.25 0 0 1 8 4.466z"/></svg>
<svg class="i" style="left:462.80px;top:143.00px;" width="17.6" height="17.6" viewBox="0 0 16 16" fill="#a4a7ad"><path fill-rule="evenodd" d="M.172 15.828a.5.5 0 0 0 .707 0l4.096-4.096V14.5a.5.5 0 1 0 1 0v-3.975a.5.5 0 0 0-.5-.5H1.5a.5.5 0 0 0 0 1h2.768L.172 15.121a.5.5 0 0 0 0 .707zM15.828.172a.5.5 0 0 0-.707 0l-4.096 4.096V1.5a.5.5 0 1 0-1 0v3.975a.5.5 0 0 0 .5.5H14.5a.5.5 0 0 0 0-1h-2.768L15.828.879a.5.5 0 0 0 0-.707z"/></svg>
<div class="t" style="left:520.58px;top:144.00px;font-size:16px;color:#6fb4ea;letter-spacing:0.798px;">SVG</div>
<svg class="i" style="left:565.00px;top:143.60px;" width="15.6" height="15.6" viewBox="0 0 16 16" fill="#7cc1f7"><path d="M7 2.5a2.5 2.5 0 1 1-5 0 2.5 2.5 0 0 1 5 0zm4.225 4.053a.5.5 0 0 0-.577.093l-3.71 4.71-2.66-2.772a.5.5 0 0 0-.63.062L.002 13v2a1 1 0 0 0 1 1h14a1 1 0 0 0 1-1v-4.5l-4.777-3.947z"/></svg>
<div class="t" style="left:624.03px;top:144.00px;font-size:16px;color:#6fb4ea;letter-spacing:1.073px;">PNG</div>
<svg class="i" style="left:668.00px;top:144.00px;" width="16" height="16" viewBox="0 0 16 16" fill="#7cc1f7"><path d="M6.002 5.5a1.5 1.5 0 1 1-3 0 1.5 1.5 0 0 1 3 0z"/><path d="M2.002 1a2 2 0 0 0-2 2v10a2 2 0 0 0 2 2h12a2 2 0 0 0 2-2V3a2 2 0 0 0-2-2h-12zm12 1a1 1 0 0 1 1 1v6.5l-3.777-1.947a.5.5 0 0 0-.577.093l-3.71 3.71-2.66-1.772a.5.5 0 0 0-.63.062L1.002 12V3a1 1 0 0 1 1-1h12z"/></svg>
<div class="b" style="left:303px;top:794px;width:1588px;height:3px;background:#e063f3;"></div>
<div class="b" style="left:1075px;top:791px;width:44px;height:9px;background:#e45cf4;"></div>
<div class="b" style="left:1093.0px;top:794.6px;width:1px;height:2px;background:rgba(90,20,110,.55);"></div>
<div class="b" style="left:1095.2px;top:794.6px;width:1px;height:2px;background:rgba(90,20,110,.55);"></div>
<div class="b" style="left:1097.4px;top:794.6px;width:1px;height:2px;background:rgba(90,20,110,.55);"></div>
<div class="b" style="left:1099.6px;top:794.6px;width:1px;height:2px;background:rgba(90,20,110,.55);"></div>
<div class="t" style="left:313.84px;top:807.50px;font-size:15.8px;color:#eceef0;font-weight:700;letter-spacing:-0.071px;">MermaidJS Source</div>
<svg class="i" style="left:1865.00px;top:804.80px;" width="16" height="16" viewBox="0 0 16 16" fill="#b5b8bd"><path fill-rule="evenodd" d="M4 2a2 2 0 0 1 2-2h8a2 2 0 0 1 2 2v8a2 2 0 0 1-2 2H6a2 2 0 0 1-2-2V2Zm2-1a1 1 0 0 0-1 1v8a1 1 0 0 0 1 1h8a1 1 0 0 0 1-1V2a1 1 0 0 0-1-1H6ZM2 5a1 1 0 0 0-1 1v8a1 1 0 0 0 1 1h8a1 1 0 0 0 1-1v-1h1v1a2 2 0 0 1-2 2H2a2 2 0 0 1-2-2V6a2 2 0 0 1 2-2h1v1H2Z"/></svg>
<div class="b" style="left:303px;top:830px;width:1588px;height:1px;background:repeating-linear-gradient(90deg,#d58be3 0 3px,transparent 3px 5px);"></div>
<div class="clip" style="left:304px;top:831px;width:1579px;height:61.8px;">
<div class="b" style="left:13px;top:13.5px;width:1552px;height:60px;background:linear-gradient(90deg,#1a1f27,#141820 60%,#10141b);"></div>
<div class="b" style="left:16px;top:13px;width:1549px;height:1px;background:repeating-linear-gradient(90deg,#3a3d45 0 3px,transparent 3px 6px);"></div>
<div class="b" style="left:13px;top:13.5px;width:2.7px;height:60px;background:#d862ea;"></div>
<div class="t" style="left:36.60px;top:31.20px;font-size:15px;color:#dfe1e4;letter-spacing:-0.05px;">classDiagram</div>
<div class="t" style="left:54.60px;top:55.60px;font-size:15px;color:#dfe1e4;"><span style="color:#6cb9f2">class</span> <span style="color:#62e04e">Card</span> {</div>
</div>
<div class="b" style="left:1882.6px;top:831px;width:7.6px;height:20px;background:#3b1747;"></div>
<div class="b" style="left:1882.6px;top:851px;width:7.6px;height:41.5px;background:#020204;"></div>
<div class="b" style="left:304px;top:895px;width:1587px;height:1px;background:repeating-linear-gradient(90deg,#5a5d65 0 3px,transparent 3px 6px);"></div>
<div class="b" style="left:1736px;top:902px;width:147px;height:43.2px;border:1.2px solid #8cc4ee;background:#0d1117;"></div>
<div class="t" style="left:1754.64px;top:917.60px;font-size:15.6px;color:#6db2e6;letter-spacing:0.637px;-webkit-text-stroke:0;">CLOSE PANEL</div>
<div class="b" style="left:303px;top:953px;width:1589px;height:1px;background:repeating-linear-gradient(90deg,#d58be3 0 3px,transparent 3px 5px);"></div>
<div class="b" style="left:325px;top:954px;width:1px;height:13px;background:#2f5878;"></div>
<div class="b" style="left:621px;top:954px;width:1px;height:13px;background:#2f5878;"></div>
<div class="clip" style="left:640px;top:954px;width:300px;height:12.6px;"><div class="t" style="left:2px;top:9px;font-size:15px;color:#9b9ea5;">need <span style="color:#6cb9f2;font-weight:700">677</span> credits to qualify</div></div>
<div class="clip" style="left:1866px;top:953.6px;width:22px;height:2.2px;"><div class="t" style="left:3px;top:-5.2px;font-size:15px;color:#c9ccd1;letter-spacing:-2px">•••</div></div>
<div class="b" style="left:0px;top:966px;width:1789px;height:1px;background:repeating-linear-gradient(90deg,#d58be3 0 3px,transparent 3px 5px);"></div>
<div class="b" style="left:1897px;top:966px;width:19px;height:1px;background:repeating-linear-gradient(90deg,#d58be3 0 3px,transparent 3px 5px);"></div>
<div class="t" style="left:4.41px;top:975.30px;font-size:12.6px;color:#d0d2d6;letter-spacing:0.426px;">©2026</div>
<div class="t" style="left:48.10px;top:975.30px;font-size:12.6px;color:#62aee8;letter-spacing:0.062px;">princess b33f heavy industries</div>
<svg class="i" style="left:0;top:0" width="1916" height="991" viewBox="0 0 1916 991" fill="none"><rect x="849.6" y="191.3" width="498.2" height="181.0" stroke="#b45cc4" stroke-width="1.3"/><path d="M849.6 244.3H1347.8" stroke="#b45cc4" stroke-width="1.3"/><path d="M849.6 297.3H1347.8" stroke="#b45cc4" stroke-width="1.3"/><rect x="756.5" y="440.2" width="292.3" height="311.9" stroke="#b45cc4" stroke-width="1.3"/><path d="M756.5 493.0H1048.8" stroke="#b45cc4" stroke-width="1.3"/><path d="M756.5 633.2H1048.8" stroke="#b45cc4" stroke-width="1.3"/><rect x="1094.7" y="483.9" width="400.9" height="224.7" stroke="#b45cc4" stroke-width="1.3"/><path d="M1094.7 536.8H1495.6" stroke="#b45cc4" stroke-width="1.3"/><path d="M1094.7 677.2H1495.6" stroke="#b45cc4" stroke-width="1.3"/><path d="M955.6 372.6L919.2 395" stroke="#d565e6" stroke-width="1"/><path d="M1241.5 372.6L1277.6 395" stroke="#d565e6" stroke-width="1"/><path d="M902.6 414.3V438" stroke="#d565e6" stroke-width="1.1"/><path d="M1294.7 414.3V481.500" stroke="#d565e6" stroke-width="1.1"/><path d="M902.6 439.6L896.8000000000001 430.8L902.6 434.40000000000003L908.4 430.8Z" fill="#e063f3" stroke="#e063f3" stroke-width="0.8" stroke-linejoin="round"/><path d="M1294.7 483.2L1288.9 474.4L1294.7 478.0L1300.5 474.4Z" fill="#e063f3" stroke="#e063f3" stroke-width="0.8" stroke-linejoin="round"/></svg>
<div class="t" style="left:1068.53px;top:195.20px;font-size:12.6px;color:#63dc4d;letter-spacing:-0.020px;">«object»</div>
<div class="t" style="left:1044.46px;top:215.60px;font-size:12.8px;color:#79c0f7;font-weight:700;letter-spacing:0.100px;">BookingPayment</div>
<div class="t" style="left:872.43px;top:444.10px;font-size:12.6px;color:#63dc4d;letter-spacing:-0.020px;">«object»</div>
<div class="t" style="left:887.27px;top:464.50px;font-size:12.8px;color:#79c0f7;font-weight:700;letter-spacing:0.100px;">Card</div>
<div class="t" style="left:1264.73px;top:487.80px;font-size:12.6px;color:#63dc4d;letter-spacing:-0.020px;">«object»</div>
<div class="t" style="left:1248.44px;top:508.20px;font-size:12.8px;color:#79c0f7;font-weight:700;letter-spacing:0.100px;">Bank_Account</div>
<div class="t" style="left:854.49px;top:247.60px;font-size:12.6px;color:#a9acb2;letter-spacing:-0.029px;">+number? amount</div>
<div class="t" style="left:854.49px;top:269.70px;font-size:12.6px;color:#a9acb2;letter-spacing:-0.151px;">+Card | Bank_Account? source</div>
<div class="t" style="left:854.49px;top:300.70px;font-size:12.6px;color:#63dc4d;letter-spacing:0.023px;">+string? id (readOnly)(format:uuid)</div>
<div class="t" style="left:854.49px;top:322.70px;font-size:12.6px;color:#63dc4d;letter-spacing:0.009px;">+string? currency(enum:8 values)</div>
<div class="t" style="left:854.49px;top:344.70px;font-size:12.6px;color:#63dc4d;letter-spacing:0.074px;">+string? status (enum:pending,succeeded,failed)(readOnly)</div>
<div class="t" style="left:760.49px;top:496.20px;font-size:12.6px;color:#a9acb2;letter-spacing:0.043px;">+string? object</div>
<div class="t" style="left:760.87px;top:518.15px;font-size:12.6px;color:#a9acb2;letter-spacing:-0.079px;">#string name</div>
<div class="t" style="left:760.87px;top:540.10px;font-size:12.6px;color:#a9acb2;letter-spacing:-0.046px;">#string number</div>
<div class="t" style="left:760.49px;top:562.05px;font-size:12.6px;color:#a9acb2;letter-spacing:0.032px;">+string? address_city</div>
<div class="t" style="left:760.87px;top:584.00px;font-size:12.6px;color:#a9acb2;letter-spacing:0.025px;">#string address_country</div>
<div class="t" style="left:760.49px;top:605.95px;font-size:12.6px;color:#a9acb2;letter-spacing:0.078px;">+string? address_post_code</div>
<div class="t" style="left:760.87px;top:636.50px;font-size:12.6px;color:#63dc4d;letter-spacing:0.067px;">#string cvc(writeOnly)</div>
<div class="t" style="left:760.87px;top:658.45px;font-size:12.6px;color:#63dc4d;letter-spacing:0.100px;">#integer exp_month(format:int64)</div>
<div class="t" style="left:760.87px;top:680.40px;font-size:12.6px;color:#63dc4d;letter-spacing:0.098px;">#integer exp_year(format:int64)</div>
<div class="t" style="left:760.54px;top:702.35px;font-size:12.6px;color:#63dc4d;letter-spacing:0.111px;">~string? address_line1(writeOnly)</div>
<div class="t" style="left:760.54px;top:724.30px;font-size:12.6px;color:#63dc4d;letter-spacing:0.111px;">~string? address_line2(writeOnly)</div>
<div class="t" style="left:1099.19px;top:540.00px;font-size:12.6px;color:#a9acb2;letter-spacing:0.007px;">+string? object</div>
<div class="t" style="left:1099.57px;top:561.95px;font-size:12.6px;color:#a9acb2;letter-spacing:-0.116px;">#string name</div>
<div class="t" style="left:1099.57px;top:583.90px;font-size:12.6px;color:#a9acb2;letter-spacing:-0.076px;">#string number</div>
<div class="t" style="left:1099.19px;top:605.85px;font-size:12.6px;color:#a9acb2;letter-spacing:0.008px;">+string? sort_code</div>
<div class="t" style="left:1099.57px;top:627.80px;font-size:12.6px;color:#a9acb2;letter-spacing:-0.024px;">#string bank_name</div>
<div class="t" style="left:1099.57px;top:649.75px;font-size:12.6px;color:#a9acb2;letter-spacing:-0.083px;">#string country</div>
<div class="t" style="left:1099.57px;top:680.50px;font-size:12.6px;color:#63dc4d;letter-spacing:0.113px;">#string account_type(enum:individual,company)</div>
<div class="t" style="left:879.21px;top:399.00px;font-size:12.8px;color:#d9dbde;letter-spacing:0.100px;">source</div>
<div class="t" style="left:1271.31px;top:399.00px;font-size:12.8px;color:#d9dbde;letter-spacing:0.100px;">source</div>
<div class="clip" style="left:0;top:981px;width:12px;height:10px;"><div class="b" style="left:0;top:-10px;width:20px;height:20px;border-radius:10px;border:1.6px solid rgba(150,155,165,.22);"></div></div>
<div class="clip" style="left:1904px;top:981px;width:12px;height:10px;"><div class="b" style="left:-8px;top:-10px;width:20px;height:20px;border-radius:10px;border:1.6px solid rgba(150,155,165,.3);"></div></div>
</div></body></html>
